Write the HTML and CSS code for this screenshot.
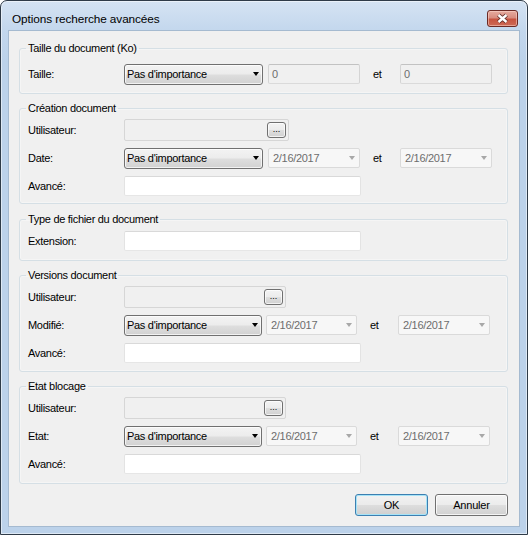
FILE: index.html
```html
<!DOCTYPE html>
<html lang="fr">
<head>
<meta charset="utf-8">
<title>Options recherche avancées</title>
<link rel="stylesheet" href="styles.css">
</head>
<body>
<div class="window">
  <div class="titlebar">
    <span class="title">Options recherche avancées</span>
    <div class="close">
      <svg width="15" height="11" viewBox="0 0 15 11">
        <path class="x-outline" d="M3.5 2 L11.5 9 M11.5 2 L3.5 9"/>
        <path class="x-fill" d="M3.5 2 L11.5 9 M11.5 2 L3.5 9"/>
      </svg>
    </div>
  </div>
  <div class="client">
    <fieldset class="group g1">
      <legend>Taille du document (Ko)</legend>
      <div class="row">
        <span class="label">Taille:</span>
        <div class="combo"><span>Pas d'importance</span><span class="arrow"></span></div>
        <div class="field disabled num">0</div>
        <span class="et">et</span>
        <div class="field disabled num">0</div>
      </div>
    </fieldset>

    <fieldset class="group g2">
      <legend>Création document</legend>
      <div class="row">
        <span class="label">Utilisateur:</span>
        <div class="user"><div class="browse">...</div></div>
      </div>
      <div class="row">
        <span class="label">Date:</span>
        <div class="combo"><span>Pas d'importance</span><span class="arrow"></span></div>
        <div class="date"><span>2/16/2017</span><span class="darrow"></span></div>
        <span class="et">et</span>
        <div class="date"><span>2/16/2017</span><span class="darrow"></span></div>
      </div>
      <div class="row">
        <span class="label">Avancé:</span>
        <div class="field text"></div>
      </div>
    </fieldset>

    <fieldset class="group g3">
      <legend>Type de fichier du document</legend>
      <div class="row">
        <span class="label">Extension:</span>
        <div class="field text"></div>
      </div>
    </fieldset>

    <fieldset class="group g4 alt">
      <legend>Versions document</legend>
      <div class="row">
        <span class="label">Utilisateur:</span>
        <div class="user"><div class="browse">...</div></div>
      </div>
      <div class="row">
        <span class="label">Modifié:</span>
        <div class="combo"><span>Pas d'importance</span><span class="arrow"></span></div>
        <div class="date"><span>2/16/2017</span><span class="darrow"></span></div>
        <span class="et">et</span>
        <div class="date"><span>2/16/2017</span><span class="darrow"></span></div>
      </div>
      <div class="row">
        <span class="label">Avancé:</span>
        <div class="field text"></div>
      </div>
    </fieldset>

    <fieldset class="group g5 alt">
      <legend>Etat blocage</legend>
      <div class="row">
        <span class="label">Utilisateur:</span>
        <div class="user"><div class="browse">...</div></div>
      </div>
      <div class="row">
        <span class="label">Etat:</span>
        <div class="combo"><span>Pas d'importance</span><span class="arrow"></span></div>
        <div class="date"><span>2/16/2017</span><span class="darrow"></span></div>
        <span class="et">et</span>
        <div class="date"><span>2/16/2017</span><span class="darrow"></span></div>
      </div>
      <div class="row">
        <span class="label">Avancé:</span>
        <div class="field text"></div>
      </div>
    </fieldset>

    <div class="buttons">
      <div class="btn default">OK</div>
      <div class="btn">Annuler</div>
    </div>
  </div>
</div>
</body>
</html>
```

FILE: styles.css
```css
html, body {
  margin: 0;
  padding: 0;
}
body {
  width: 528px;
  height: 535px;
  overflow: hidden;
  background: #ffffff;
  font-family: "Liberation Sans", Arial, sans-serif;
  font-size: 11px;
  color: #000;
}
.window {
  box-sizing: border-box;
  width: 528px;
  height: 535px;
  border: 1px solid #2f3b48;
  border-radius: 7px 7px 0 0;
  background: linear-gradient(#d5e3f3 0, #c3d7ed 30px, #bcd2ea 60px, #bcd2ea 100%);
  box-shadow: inset 0 0 0 1px rgba(255, 255, 255, 0.5);
  padding: 0 7px 7px 7px;
  display: flex;
  flex-direction: column;
}
.titlebar {
  height: 29px;
  display: flex;
  align-items: flex-start;
  justify-content: space-between;
  flex: none;
}
.title {
  margin-top: 11px;
  margin-left: 4px;
  font-size: 11.8px;
  line-height: 15px;
  letter-spacing: -0.1px;
  color: #000;
}
.close {
  box-sizing: border-box;
  margin-top: 9px;
  margin-right: 2px;
  width: 31px;
  height: 17px;
  border: 1px solid #6b2a25;
  border-radius: 3px;
  background: linear-gradient(#e6ab9f 0, #d88d80 45%, #c7533f 55%, #cd6a56 100%);
  box-shadow: inset 0 0 0 1px rgba(255, 220, 210, 0.5);
  display: flex;
  align-items: center;
  justify-content: center;
}
.close svg {
  display: block;
}
.x-outline {
  stroke: #5c2a26;
  stroke-width: 4.2;
  fill: none;
}
.x-fill {
  stroke: #ffffff;
  stroke-width: 2.4;
  fill: none;
}

.client {
  flex: 1;
  background: #f0f0f0;
  border: 1px solid #a5bad0;
  padding: 10px 11px 0 10px;
  display: flex;
  flex-direction: column;
}
.group {
  margin: 7px 0 0 0;
  padding: 1px 8px 5px 8px;
  border: 1px solid #d5dfe5;
  border-radius: 3px;
  min-width: 0;
  box-shadow: inset 0 0 0 1px rgba(255,255,255,0.35);
}
.group legend {
  padding: 0 2px;
  margin-left: -2px;
  line-height: 14px;
  font-size: 11px;
  letter-spacing: -0.3px;
}
.g1 { margin-top: 0; padding-top: 5px; }
.g2 { padding-bottom: 3px; }
.g3 { margin-top: 8px; }
.g4 { padding-bottom: 4px; }

.row {
  height: 28px;
  display: flex;
  align-items: center;
  letter-spacing: -0.3px;
}
.label {
  width: 96px;
  flex: none;
}
.combo {
  box-sizing: border-box;
  width: 139px;
  height: 21px;
  border: 1px solid #707070;
  border-radius: 3px;
  background: linear-gradient(#f3f3f3 0, #ececec 48%, #dedede 52%, #d1d1d1 100%);
  box-shadow: inset 0 0 0 1px rgba(255, 255, 255, 0.7);
  padding: 0 2px 0 2px;
  display: flex;
  align-items: center;
  justify-content: space-between;
  flex: none;
}
.arrow {
  width: 0;
  height: 0;
  border-left: 3.5px solid transparent;
  border-right: 3.5px solid transparent;
  border-top: 4px solid #000;
  margin-right: 1px;
}
.field {
  box-sizing: border-box;
  height: 20px;
  border: 1px solid #d0d0d0;
  border-radius: 2px;
  display: flex;
  align-items: center;
  padding: 0 3px;
  flex: none;
}
.field.disabled {
  background: #f0f0f0;
  border-color: #c2c2c2 #d4d4d4 #dadada #d4d4d4;
  color: #6d6d6d;
}
.field.num {
  width: 92px;
}
.combo + .field.num {
  margin-left: 5px;
}
.field.text {
  width: 237px;
  background: #ffffff;
  border-color: #d9d9d9 #e3e3e3 #e6e6e6 #e3e3e3;
}
.et {
  width: 40px;
  flex: none;
  padding-left: 13px;
  box-sizing: border-box;
}
.date {
  box-sizing: border-box;
  width: 92px;
  height: 20px;
  border: 1px solid #dadada;
  border-radius: 2px;
  background: #f7f7f7;
  color: #6d6d6d;
  display: flex;
  align-items: center;
  justify-content: space-between;
  padding: 0 4px 0 4px;
  flex: none;
}
.combo + .date {
  margin-left: 5px;
}
.darrow {
  width: 0;
  height: 0;
  border-left: 3.5px solid transparent;
  border-right: 3.5px solid transparent;
  border-top: 4px solid #a8a8a8;
}
.user {
  box-sizing: border-box;
  width: 165px;
  height: 22px;
  border: 1px solid #d6d6d6;
  border-radius: 2px;
  background: #f0f0f0;
  display: flex;
  align-items: center;
  justify-content: flex-end;
  padding-right: 2px;
  flex: none;
}
.browse {
  box-sizing: border-box;
  width: 19px;
  height: 16px;
  border: 1px solid #707070;
  border-radius: 3px;
  background: linear-gradient(#f3f3f3 0, #ececec 48%, #dedede 52%, #d1d1d1 100%);
  box-shadow: inset 0 0 0 1px rgba(255, 255, 255, 0.7);
  font-size: 9px;
  line-height: 12px;
  text-align: center;
  letter-spacing: 0;
  color: #000;
}

/* groups 4 and 5 are laid out one or two pixels to the left */
.alt .combo { width: 138px; }
.alt .combo + .date { margin-left: 4px; width: 91px; }
.alt .et { width: 41px; padding-left: 13px; }
.alt .user { width: 162px; }

.buttons {
  display: flex;
  justify-content: flex-end;
  gap: 7px;
  margin-top: 10px;
}
.btn {
  box-sizing: border-box;
  width: 73px;
  height: 22px;
  border: 1px solid #707070;
  border-radius: 3px;
  background: linear-gradient(#f3f3f3 0, #ececec 48%, #dedede 52%, #d1d1d1 100%);
  box-shadow: inset 0 0 0 1px rgba(255, 255, 255, 0.75);
  display: flex;
  align-items: center;
  justify-content: center;
  letter-spacing: -0.2px;
}
.btn.default {
  border-color: #3c7fb1;
  box-shadow: inset 0 0 0 1px #a6e3f7;
  background: linear-gradient(#f2f2f2 0, #ebebeb 48%, #dddddd 52%, #cfcfcf 100%);
}
```
